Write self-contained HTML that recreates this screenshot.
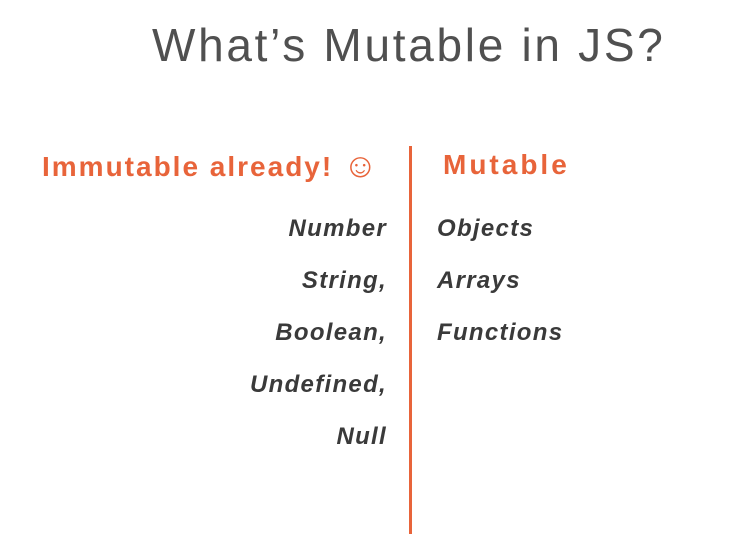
<!DOCTYPE html>
<html><head><style>
body{margin:0;width:733px;height:534px;background:#fff;position:relative;overflow:hidden;font-family:"Liberation Sans",sans-serif}
.t{position:absolute;left:152px;top:18px;font-size:46px;color:#505050;font-weight:normal;letter-spacing:2.7px;white-space:nowrap}
.h{position:absolute;top:149px;font-size:28px;line-height:32px;color:#e8643a;font-weight:bold;white-space:nowrap;letter-spacing:2px}
.line{position:absolute;left:409px;top:146px;width:3px;height:388px;background:#e8643a}
.i{position:absolute;font-size:24px;font-style:italic;font-weight:bold;color:#3a3a3a;white-space:nowrap;letter-spacing:1.3px}
.r{right:346px;text-align:right}
.l{left:437px}
</style></head><body>
<div class="t">What’s Mutable in JS?</div>
<div class="h" style="left:42px">Immutable already! <span style="font-size:34px;line-height:32px;font-weight:normal;letter-spacing:0;position:relative;top:1px">☺</span></div>
<div class="h" style="left:443px;letter-spacing:3px">Mutable</div>
<div class="line"></div>
<div class="i r" style="top:215px">Number</div>
<div class="i r" style="top:267px">String,</div>
<div class="i r" style="top:319px">Boolean,</div>
<div class="i r" style="top:371px">Undefined,</div>
<div class="i r" style="top:423px">Null</div>
<div class="i l" style="top:215px">Objects</div>
<div class="i l" style="top:267px">Arrays</div>
<div class="i l" style="top:319px">Functions</div>
</body></html>
